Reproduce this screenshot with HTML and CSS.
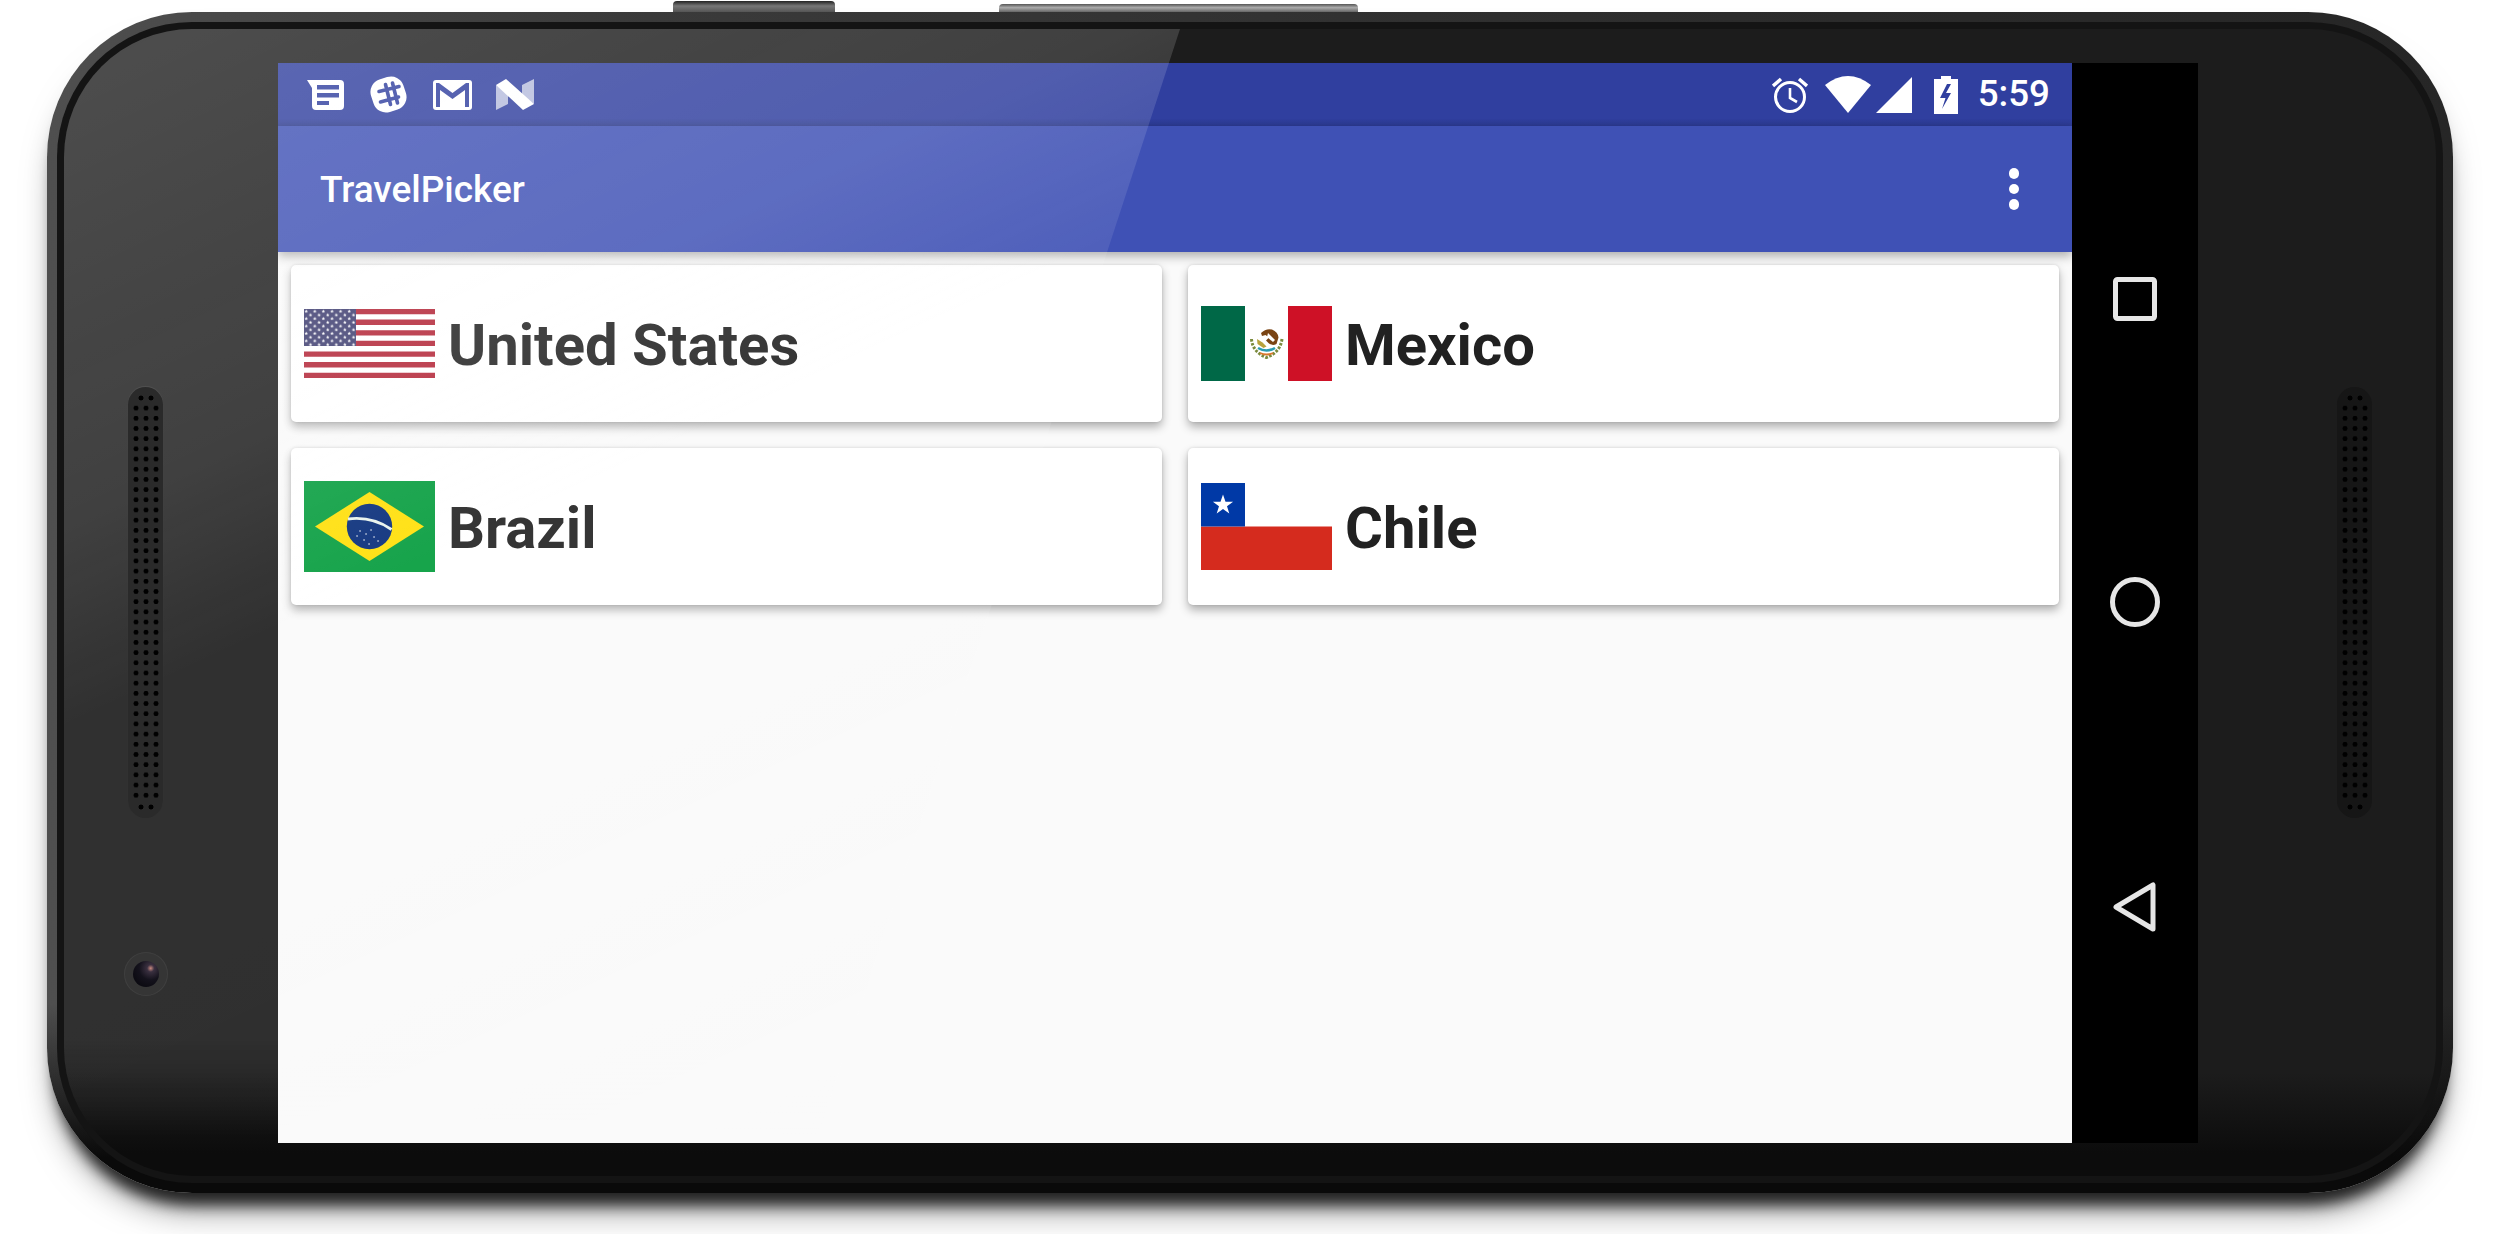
FILE: index.html
```html
<!DOCTYPE html>
<html lang="en">
<head>
  <meta charset="UTF-8">
  <title>TravelPicker</title>
  <link rel="stylesheet" href="styles.css">
</head>
<body>
  <div class="phone">
    <div class="side-btn side-btn-power"></div>
    <div class="side-btn side-btn-volume"></div>
    <div class="ring">
      <div class="glass">
        <div class="bezel bezel-left">
          <div class="speaker"><div class="holes"></div></div>
          <div class="camera"><div class="lens"></div></div>
        </div>

        <div class="screen">
          <div class="app">
            <div class="statusbar">
              <svg class="ic" width="37" height="30" viewBox="0 0 37 30">
                <path d="M0 0H33a4 4 0 0 1 4 4V26a4 4 0 0 1-4 4H9a4 4 0 0 1-4-4V8Z" fill="#fff"/>
                <path d="M10 5h22v4.400H10zM10 13h22v4.400H10zM10 21h12v4H10z" fill="#303f9f"/>
              </svg>
              <svg class="ic" width="41" height="41" viewBox="0 0 41 41">
                <rect x="3.500" y="3.500" width="34" height="34" rx="13" fill="#fff" transform="rotate(-18 20.500 20.500)"/>
                <path d="M17.500 10.500l5 20M24.500 9l5 20M11 17.500l20-5M12.500 28l18-5" stroke="#303f9f" stroke-width="3.600" stroke-linecap="round" fill="none"/>
              </svg>
              <svg class="ic" width="39" height="30" viewBox="0 0 39 30">
                <rect width="39" height="30" rx="3" fill="#fff"/>
                <path d="M3 3V27H7V10L19.500 19 32 10V27H36V3H33L19.500 13 6 3Z" fill="#303f9f"/>
              </svg>
              <svg class="ic" width="38" height="31" viewBox="0 0 38 31">
                <path d="M0 6L12 14V25L0 31ZM38 0V25L26 17V6Z" fill="#fff" opacity=".65"/>
                <path d="M0 6L10 0 38 25 27 31Z" fill="#fff"/>
              </svg>
              <div class="status-right">
                <svg class="ic ic-alarm" width="36" height="38" viewBox="0 0 36 38">
                  <circle cx="18" cy="21" r="14.500" fill="none" stroke="#fff" stroke-width="3"/>
                  <path d="M18 12V22L25 26" fill="none" stroke="#fff" stroke-width="2.600"/>
                  <path d="M1 10L9 3M35 10L27 3" stroke="#fff" stroke-width="3.400"/>
                </svg>
                <svg class="ic ic-wifi" width="46" height="37" viewBox="0 0 46 37">
                  <path d="M0 9Q23 -9 46 9L23 37Z" fill="#fff"/>
                </svg>
                <svg class="ic ic-signal" width="36" height="36" viewBox="0 0 36 36">
                  <path d="M0 36L36 0V36Z" fill="#fff"/>
                </svg>
                <svg class="ic ic-battery" width="24" height="38" viewBox="0 0 24 38">
                  <path d="M7 0H17V3H24V38H0V3H7Z" fill="#fff"/>
                  <path d="M13 8L6 22H11.500L8 33 17 17H12L17 8Z" fill="#303f9f"/>
                </svg>
                <span class="time">5:59</span>
              </div>
            </div>

            <div class="toolbar">
              <span class="title">TravelPicker</span>
              <div class="overflow"><i></i><i></i><i></i></div>
            </div>

            <div class="content">
              <div class="card">
                <svg class="flag" width="131" height="69" viewBox="0 0 131 69">
                  <defs>
                    <pattern id="stars" width="8.600" height="7.400" patternUnits="userSpaceOnUse">
                      <path d="M2.200 .5l.5 1.200 1.200.1-.9.8.3 1.200-1.100-.6-1.100.6.3-1.200-.9-.8 1.200-.1z" fill="#fff"/>
                      <path d="M6.500 4.200l.5 1.200 1.200.1-.9.8.3 1.200-1.100-.6-1.100.6.3-1.200-.9-.8 1.200-.1z" fill="#fff"/>
                    </pattern>
                  </defs>
                  <rect width="131" height="69" fill="#fff"/>
                  <path d="M0 0h131v5.300H0zM0 10.600h131v5.300H0zM0 21.200h131v5.300H0zM0 31.800h131v5.300H0zM0 42.500h131v5.300H0zM0 53.100h131v5.300H0zM0 63.700h131V69H0z" fill="#b22234"/>
                  <rect width="52" height="37" fill="#3c3b6e"/>
                  <rect width="52" height="37" fill="url(#stars)"/>
                </svg>
                <span class="country">United States</span>
              </div>
              <div class="card">
                <svg class="flag" width="131" height="75" viewBox="0 0 131 75">
                  <rect width="44" height="75" fill="#006847"/>
                  <rect x="44" width="43" height="75" fill="#fff"/>
                  <rect x="87" width="44" height="75" fill="#ce1126"/>
                  <path d="M50.500 33q1 13 15 18.500 14-5.500 15.500-18.500" fill="none" stroke="#7a8a3c" stroke-width="3" stroke-dasharray="2.600 1.400"/>
                  <path d="M57 42q8.500 5 17 0" fill="none" stroke="#2a9cb0" stroke-width="2.600"/>
                  <path d="M59 47q6.500 3 13 0" fill="none" stroke="#d9772c" stroke-width="1.800"/>
                  <path d="M60 27q5-5 11-3.500 6 2.500 6.500 8l-2 6.500q-4 2-7.500-.5l-3-3 3-3-3.500-2.500-3.500 1Z" fill="#7a4414"/>
                  <path d="M56 33l5.500 3.500 4 4-3 1.500-6-4Z" fill="#b9a23c"/>
                  <path d="M67 27l7 7-2 2-6-5Z" fill="#fff"/>
                </svg>
                <span class="country">Mexico</span>
              </div>
              <div class="card">
                <svg class="flag" width="131" height="91" viewBox="0 0 131 91">
                  <rect width="131" height="91" fill="#009b3a"/>
                  <path d="M11 45.500L65.500 11 120 45.500 65.500 80Z" fill="#ffdf00"/>
                  <circle cx="65.500" cy="45.500" r="22.700" fill="#002776"/>
                  <path d="M44 38Q68 35 87.500 48.500" fill="none" stroke="#e8f3ec" stroke-width="2.800"/>
                  <path d="M56 50h.1M62 53h.1M67 49h.1M70 56h.1M60 59h.1M74 60h.1M65 63h.1M53 55h.1" stroke="#fff" stroke-width="1.400" stroke-linecap="round"/>
                </svg>
                <span class="country">Brazil</span>
              </div>
              <div class="card">
                <svg class="flag" width="131" height="87" viewBox="0 0 131 87">
                  <rect width="131" height="43.500" fill="#fff"/>
                  <rect y="43.500" width="131" height="43.500" fill="#d52b1e"/>
                  <rect width="44" height="43.500" fill="#0039a6"/>
                  <path d="M22 11.500l2.500 7.200h7.600l-6.100 4.500 2.300 7.300-6.300-4.400-6.300 4.400 2.300-7.300-6.100-4.500h7.600Z" fill="#fff"/>
                </svg>
                <span class="country">Chile</span>
              </div>
            </div>
          </div>

          <div class="navbar">
            <svg width="44" height="44" viewBox="0 0 44 44">
              <rect x="2.500" y="2.500" width="39" height="39" rx="2" fill="none" stroke="#e6e6e6" stroke-width="5"/>
            </svg>
            <svg width="50" height="50" viewBox="0 0 50 50">
              <circle cx="25" cy="25" r="22.500" fill="none" stroke="#e6e6e6" stroke-width="5"/>
            </svg>
            <svg width="44" height="50" viewBox="0 0 44 50">
              <path d="M3 25L40 3V47Z" fill="none" stroke="#e6e6e6" stroke-width="5" stroke-linejoin="round"/>
            </svg>
          </div>
        </div>

        <div class="bezel bezel-right">
          <div class="speaker"><div class="holes"></div></div>
        </div>

        <div class="gloss"></div>
      </div>
    </div>
  </div>
</body>
</html>
```

FILE: styles.css
```css
html,
body {
  height: 100%;
}
body {
  margin: 0;
  padding-top: 12px;
  box-sizing: border-box;
  background: #fff;
  font-family: Roboto, "Liberation Sans", sans-serif;
}
.phone {
  position: relative;
  width: 2406px;
  height: 1181px;
  margin-left: 47px;
  padding: 10px;
  box-sizing: border-box;
  border-radius: 145px;
  background:
    linear-gradient(to bottom, transparent 84%, #0a0a0a 97%),
    linear-gradient(to right, #4f4f4f 0, #3a3a3a 25%, #2c2c2c 70%, #262626 100%);
  box-shadow: 0 20px 14px -8px rgba(0,0,0,0.75), 0 26px 36px -14px rgba(0,0,0,0.6);
}
.side-btn {
  position: absolute;
  background: linear-gradient(to bottom, #222, #777 45%, #555);
  border-radius: 4px 4px 0 0;
}
.side-btn-power {
  left: 626px;
  top: -11px;
  width: 162px;
  height: 11px;
}
.side-btn-volume {
  left: 952px;
  top: -8px;
  width: 359px;
  height: 8px;
  background: linear-gradient(to bottom, #555, #aaa 45%, #666);
}
.ring {
  height: 100%;
  padding: 7px;
  box-sizing: border-box;
  border-radius: 135px;
  background: #141414;
}
.glass {
  position: relative;
  display: flex;
  height: 100%;
  padding: 34px 0 33px;
  box-sizing: border-box;
  border-radius: 128px;
  overflow: hidden;
  background: linear-gradient(to bottom, #1c1c1c 91%, #0c0c0c 98%);
}
.gloss {
  position: absolute;
  z-index: 2;
  left: 0;
  top: 0;
  width: 1116px;
  height: 100%;
  clip-path: polygon(0 0, 1116px 0, 741px 100%, 0 100%);
  background: linear-gradient(155deg, rgba(255,255,255,0.22) 0, rgba(255,255,255,0.16) 30%, rgba(255,255,255,0.09) 42%, rgba(255,255,255,0.09) 60%, rgba(255,255,255,0.07) 100%);
  -webkit-mask-image: linear-gradient(to bottom, #000 88%, transparent 97%);
  mask-image: linear-gradient(to bottom, #000 88%, transparent 97%);
  pointer-events: none;
}

/* bezels */
.bezel {
  display: flex;
  flex-direction: column;
  align-items: flex-start;
  box-sizing: border-box;
}
.bezel-left {
  width: 214px;
  padding: 324px 0 0 64px;
}
.bezel-right {
  width: 238px;
  padding: 324px 0 0 139px;
}
.speaker {
  position: relative;
  z-index: 3;
  display: flex;
  flex-direction: column;
  align-items: center;
  width: 35px;
  height: 431px;
  padding: 6px 0;
  box-sizing: border-box;
  border-radius: 18px;
  background: #2a2a2a;
  box-shadow: 0 -1px 1px rgba(255,255,255,0.08);
}
.bezel-right .speaker {
  background: #161616;
  box-shadow: none;
}
.speaker::before,
.speaker::after,
.holes {
  content: "";
  background-image: radial-gradient(circle, #000 2.200px, transparent 2.800px);
  background-size: 10px 10.200px;
}
.speaker::before,
.speaker::after {
  width: 20px;
  height: 10.200px;
}
.holes {
  flex: 1;
  width: 30px;
}
.camera {
  position: relative;
  z-index: 3;
  display: flex;
  align-items: center;
  justify-content: center;
  width: 44px;
  height: 44px;
  margin: 134px 0 0 -4px;
  border-radius: 50%;
  background: #353535;
  box-shadow: inset 0 0 0 1px #3f3f3f;
}
.lens {
  width: 26px;
  height: 26px;
  border-radius: 50%;
  background: radial-gradient(circle at 68% 28%, #c98a80 0, #3a3040 14%, #14121c 45%, #05050a 100%);
}

/* screen */
.screen {
  display: flex;
  width: 1920px;
  height: 1080px;
}
.app {
  display: flex;
  flex-direction: column;
  width: 1794px;
  overflow: hidden;
  background: #fafafa;
}
.navbar {
  display: flex;
  flex-direction: column;
  align-items: center;
  justify-content: center;
  gap: 255.500px;
  width: 126px;
  padding-top: 3px;
  box-sizing: border-box;
  background: #000;
}
.statusbar {
  display: flex;
  align-items: center;
  gap: 24px;
  height: 63px;
  padding: 0 22px 0 29px;
  box-sizing: border-box;
  color: #fff;
  background: linear-gradient(to bottom, #303f9f 88%, #2c3a92);
}
.ic {
  display: block;
  flex: none;
}
.status-right {
  display: flex;
  align-items: center;
  margin-left: auto;
}
.ic-wifi {
  margin-left: 17px;
}
.ic-signal {
  margin-left: 5px;
}
.ic-battery {
  margin-left: 22px;
}
.time {
  margin-left: 20px;
  font-size: 36.750px;
  font-weight: 500;
  line-height: 1;
}
.toolbar {
  position: relative;
  z-index: 1;
  display: flex;
  align-items: center;
  justify-content: space-between;
  height: 126px;
  flex: none;
  padding: 0 53px 0 42px;
  box-sizing: border-box;
  background: #3f51b5;
  box-shadow: 0 4px 10px rgba(0,0,0,0.32);
}
.title {
  color: #fff;
  font-size: 37px;
  font-weight: 500;
}
.overflow {
  display: flex;
  flex-direction: column;
  gap: 5px;
}
.overflow i {
  display: block;
  width: 10.500px;
  height: 10.500px;
  border-radius: 50%;
  background: #fff;
}
.content {
  display: grid;
  grid-template-columns: 1fr 1fr;
  grid-auto-rows: 157px;
  gap: 26px;
  padding: 13px;
}
.card {
  display: flex;
  align-items: center;
  gap: 13px;
  padding: 0 13px;
  border-radius: 5px;
  background: #fff;
  box-shadow: 0 5px 10px rgba(0,0,0,0.3), 0 0 3px rgba(0,0,0,0.12);
}
.flag {
  display: block;
  flex: none;
}
.country {
  margin-top: 2px;
  color: #212121;
  font-size: 58px;
  font-weight: 700;
}
```
